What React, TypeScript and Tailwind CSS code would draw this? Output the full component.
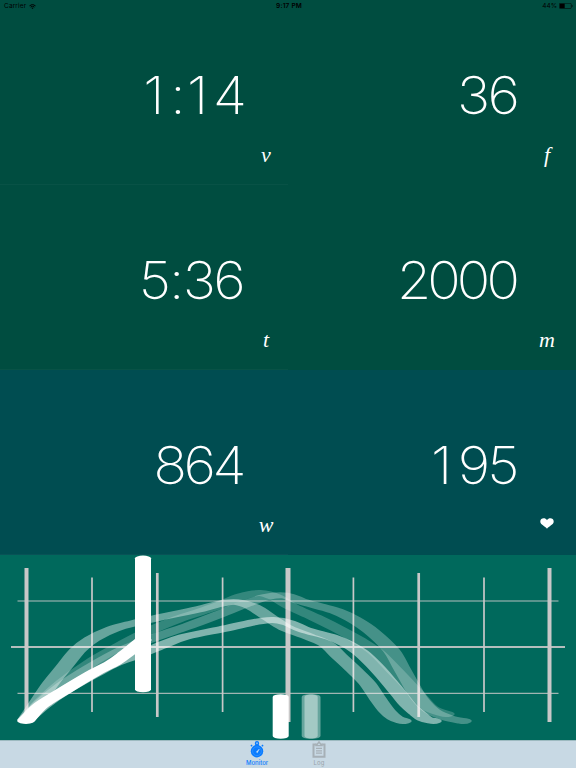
import React from 'react'

type Point = [number, number]

interface MetricProps {
  value: string
  unit: string
  side: 'left' | 'right'
  tone: string
}

function glyphClass(c: string) {
  if (c === '1') return 'w-[27px] text-center tracking-normal'
  if (c === ':') return 'w-[14px] pl-[2px] text-center tracking-normal'
  return 'tabular-nums'
}

function Metric({ value, unit, side, tone }: MetricProps) {
  const left = side === 'left'
  return (
    <div className={`relative flex justify-end ${tone}`}>
      <div className="mr-[2.8px] flex origin-right scale-x-[1.07] pt-[62px] font-['Inter','Liberation_Sans',sans-serif] text-[52px] font-extralight leading-[67px] tracking-[-5.9px] text-white">
        {value.split('').map((c, i) => (
          <span key={i} className={glyphClass(c)}>
            {c}
          </span>
        ))}
      </div>
      <div
        className={`${left ? 'w-11' : 'w-[58px]'} pt-[143px] text-center font-['Liberation_Serif',serif] text-[22px] italic leading-6 text-white`}
      >
        {unit === 'heart' ? (
          <svg className="mx-auto mt-[5px] h-[11px] w-[14px]" viewBox="0 0 14 11" fill="currentColor">
            <path d="M7 10.8C5.2 8 .3 6.8.3 3.5.3-.2 5.3-.8 7 2.3 8.7-.8 13.7-.2 13.7 3.5 13.7 6.8 8.8 8 7 10.8z" />
          </svg>
        ) : (
          unit
        )}
      </div>
      {left && <div className="absolute bottom-0 left-0 h-px w-full bg-white/[0.03]" />}
    </div>
  )
}

// The pen is a flat ellipse: x is squeezed, then stretched back by the group
const NIB = 3

function smooth(points: Point[]) {
  const p = points.map(([x, y]) => [x / NIB, y])
  let d = `M${p[0][0]} ${p[0][1]}`
  for (let i = 0; i < p.length - 1; i++) {
    const a = p[Math.max(i - 1, 0)]
    const b = p[i]
    const c = p[i + 1]
    const e = p[Math.min(i + 2, p.length - 1)]
    d += `C${b[0] + (c[0] - a[0]) / 6} ${b[1] + (c[1] - a[1]) / 6} ${c[0] - (e[0] - b[0]) / 6} ${c[1] - (e[1] - b[1]) / 6} ${c[0]} ${c[1]}`
  }
  return d
}

const strokes: { opacity: number; points: Point[] }[] = [
  {
    opacity: 0.2,
    points: [[26, 720], [42, 702], [64, 682], [92, 662], [120, 646], [147, 632], [176, 620], [200, 612], [220, 605], [243, 596], [260, 593], [275, 597], [290, 606], [316, 618], [338, 629], [358, 640], [376, 652], [394, 670], [414, 691], [430, 708], [446, 714]],
  },
  {
    opacity: 0.27,
    points: [[26, 720], [42, 703], [64, 685], [92, 667], [125, 649], [162, 635], [191, 625], [220, 614], [245, 604], [266, 597], [285, 595.5], [300, 601], [318, 606], [336, 611], [353, 619], [371, 631], [391, 650], [401, 667], [410, 683], [419, 698], [432, 711], [448, 718], [463, 721]],
  },
  {
    opacity: 0.4,
    points: [[26, 720], [38, 702], [51, 683], [64, 667], [78, 650], [92, 639], [113, 629], [135, 623], [157, 618], [200, 609], [219, 604], [236, 602], [253, 607], [270, 618], [286, 628], [307, 636], [326, 644], [340, 657], [353, 669], [367, 683], [378, 699], [387, 711], [395, 718], [403, 721]],
  },
  {
    opacity: 0.5,
    points: [[26, 720], [42, 706], [64, 691], [92, 675], [113, 664], [135, 656], [160, 646], [184, 637], [223, 629], [255, 622], [273, 620], [289, 623], [305, 630], [331, 637], [347, 644], [360, 652], [373, 664], [384, 676], [399, 694], [408, 705], [417, 713], [425, 719], [433, 721]],
  },
  {
    opacity: 1,
    points: [[26, 721], [40, 706], [62, 692], [92, 674], [113, 663], [127, 653], [143, 640]],
  },
]

const columns = [
  { x: 26.5, y1: 568, y2: 720, w: 4 },
  { x: 92, y1: 577.5, y2: 712, w: 1.7 },
  { x: 157.3, y1: 573, y2: 717, w: 2.7 },
  { x: 222.6, y1: 577.5, y2: 712, w: 1.7 },
  { x: 288, y1: 568, y2: 722, w: 5 },
  { x: 353.4, y1: 577.5, y2: 712, w: 1.7 },
  { x: 418.7, y1: 573, y2: 717, w: 2.7 },
  { x: 484, y1: 577.5, y2: 712, w: 1.7 },
  { x: 549.5, y1: 568, y2: 722, w: 4 },
]

function Handle({ x, y, height, opacity = 1 }: { x: number; y: number; height: number; opacity?: number }) {
  return <rect x={x} y={y} width="16" height={height} rx="8" ry="2.7" fill="#fff" fillOpacity={opacity} />
}

function ForceChart() {
  return (
    <svg className="block h-[185px] w-full bg-[#00695c]" viewBox="0 555 576 185">
      <g stroke="#c8c8c8">
        <path d="M17.5 601H558.5" strokeWidth="1.7" strokeOpacity=".6" />
        <path d="M11 647H565" strokeWidth="1.9" strokeOpacity=".9" />
        <path d="M17.5 693.4H558.5" strokeWidth="1.2" strokeOpacity=".8" />
        {columns.map((c) => (
          <path key={c.x} d={`M${c.x} ${c.y1}V${c.y2}`} strokeWidth={c.w} />
        ))}
      </g>
      <g transform={`scale(${NIB} 1)`} fill="none" stroke="#fff" strokeWidth="5.8" strokeLinecap="round" strokeLinejoin="round">
        {strokes.map((s, i) => (
          <path key={i} d={smooth(s.points)} strokeOpacity={s.opacity} />
        ))}
      </g>
      <Handle x={135} y={555.6} height={136.6} />
      <Handle x={272.7} y={694.3} height={44.4} />
      <Handle x={301.7} y={694.3} height={44.4} opacity={0.4} />
      <Handle x={304.5} y={694.3} height={44.4} opacity={0.4} />
    </svg>
  )
}

function StatusBar() {
  return (
    <div className="absolute inset-x-0 top-0 z-10 flex h-3 items-center px-1 font-['Inter',sans-serif] text-[6.5px] leading-3 text-black">
      <div className="flex flex-1 items-center gap-[3px]">
        <span className="tracking-[0.02em]">Carrier</span>
        <svg className="h-[5px] w-[7px]" viewBox="0 0 14 10" fill="none" stroke="currentColor" strokeWidth="2">
          <path d="M1 3.6a8.8 8.8 0 0 1 12 0M3.2 6.2a5.6 5.6 0 0 1 7.6 0" />
          <path d="M5 8a3 3 0 0 1 4 0L7 10z" fill="currentColor" stroke="none" />
        </svg>
      </div>
      <div className="pl-0.5 font-semibold tracking-[0.03em]">9:17 PM</div>
      <div className="flex flex-1 items-center justify-end gap-0.5">
        44%
        <svg className="-mr-px h-[6px] w-[14px]" viewBox="0 0 14 6">
          <rect x=".3" y=".3" width="12" height="5.2" rx="1" fill="none" stroke="currentColor" strokeWidth=".5" />
          <rect x=".7" y=".7" width="5" height="4.4" fill="currentColor" />
          <path d="M12.8 2v2q.9-.3.9-1t-.9-1z" fill="currentColor" />
        </svg>
      </div>
    </div>
  )
}

function TabBar() {
  return (
    <div className="flex h-7 justify-center gap-[18px] border-t border-[#9dbac0] bg-[#c8d9e4] font-['Inter',sans-serif] text-[6px] leading-[7px]">
      <div className="flex w-11 flex-col items-center text-[#0a7cff]">
        <svg className="h-[17px] w-4" viewBox="0 0 16 17" fill="none" stroke="currentColor">
          <circle cx="8" cy="10.2" r="6.2" fill="currentColor" stroke="none" />
          <circle cx="8" cy="2.2" r="1.6" fill="#7fb8f5" strokeWidth="1.2" />
          <path d="M6 4.2h4M3.1 4.1 1.9 5.3M12.9 4.1l1.2 1.2" strokeWidth="1.4" />
          <circle cx="8" cy="10.2" r="4.4" stroke="#4a9efa" strokeWidth=".5" />
          <path d="m7.3 11.1 3-3.1-1.9 3.8z" fill="#d5e6f4" stroke="#d5e6f4" strokeWidth=".4" />
        </svg>
        <span className="font-medium leading-[9px]">Monitor</span>
      </div>
      <div className="flex w-11 flex-col items-center text-[#a6b0b6]">
        <svg className="h-[17px] w-4" viewBox="0 0 16 17" fill="none" stroke="currentColor">
          <path d="M4.8 3.4H2.5v12.4h11V3.4h-2.3" strokeWidth="2" />
          <path d="M5 4.6V3.2h1.3L8 .9l1.7 2.3H11v1.4z" strokeWidth="1.4" />
          <path d="M5 7.4h6M5 9.8h6M5 12.2h6" strokeWidth="1.2" />
        </svg>
        <span className="leading-[9px] tracking-[0.02em] text-[#98a3aa]">Log</span>
      </div>
    </div>
  )
}

export default function App() {
  return (
    <div className="relative flex h-[768px] w-[576px] flex-col overflow-hidden bg-[#004d40]">
      <StatusBar />
      <div className="grid h-[555px] grid-cols-2 grid-rows-3">
        <Metric value="1:14" unit="v" side="left" tone="bg-[#004d40]" />
        <Metric value="36" unit="f" side="right" tone="bg-[#004d40]" />
        <Metric value="5:36" unit="t" side="left" tone="bg-[#004d40]" />
        <Metric value="2000" unit="m" side="right" tone="bg-[#004d40]" />
        <Metric value="864" unit="w" side="left" tone="bg-[#004d51]" />
        <Metric value="195" unit="heart" side="right" tone="bg-[#004d51]" />
      </div>
      <ForceChart />
      <TabBar />
    </div>
  )
}
